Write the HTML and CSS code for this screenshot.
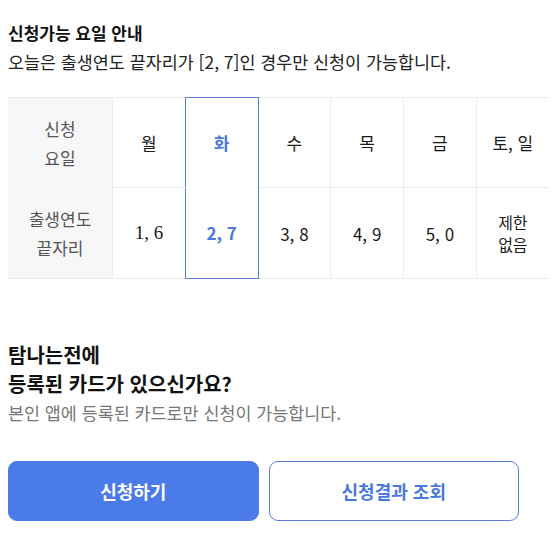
FILE: index.html
```html
<!DOCTYPE html>
<html lang="ko">
<head>
	<meta charset="utf-8">
	<meta name="viewport" content="width=device-width, initial-scale=1.0">
	<link rel="stylesheet" href="styles.css">
	<title>신청가능 요일 안내</title>
</head>
<body>
	<div class="guide">
		<h2 class="guide-title">신청가능 요일 안내</h2>
		<p class="guide-desc">오늘은 출생연도 끝자리가 [2, 7]인 경우만 신청이 가능합니다.</p>

		<table class="day-table">
			<tr class="row-day">
				<th>신청<br>요일</th>
				<td>월</td>
				<td class="today">화</td>
				<td>수</td>
				<td>목</td>
				<td>금</td>
				<td>토, 일</td>
			</tr>
			<tr class="row-num">
				<th>출생연도<br>끝자리</th>
				<td class="serif">1, 6</td>
				<td class="today">2, 7</td>
				<td>3, 8</td>
				<td>4, 9</td>
				<td>5, 0</td>
				<td class="none">제한<br>없음</td>
			</tr>
		</table>
	</div>

	<div class="card-info">
		<h3 class="card-title">탐나는전에<br>등록된 카드가 있으신가요?</h3>
		<p class="card-desc">본인 앱에 등록된 카드로만 신청이 가능합니다.</p>
	</div>

	<div class="btn-row">
		<button type="button" class="btn btn-primary">신청하기</button>
		<button type="button" class="btn btn-line">신청결과 조회</button>
	</div>
</body>
</html>
```

FILE: styles.css
```css
body {
	margin: 8px;
	font-family: "Noto Sans CJK KR", "Noto Sans", sans-serif;
	color: #111;
	background: #fff;
}
.guide {
	padding-top: 12px;
}
.guide-title {
	margin: 0;
	font-size: 17px;
	font-weight: 700;
	line-height: 26px;
}
.guide-desc {
	margin: 3px 0 0;
	font-size: 17.4px;
	line-height: 26px;
	color: #222;
}
.day-table {
	width: 100%;
	margin-top: 22px;
	border-collapse: collapse;
	table-layout: fixed;
	border-top: 1px solid #e8e8e8;
	border-bottom: 1px solid #e8e8e8;
	text-align: center;
	font-size: 17px;
}
.day-table th {
	width: 104px;
	padding: 0;
	background: #f7f7f7;
	color: #555;
	font-weight: 400;
	line-height: 29px;
}
.day-table td {
	padding: 0;
	border-left: 1px solid #ececec;
	color: #1a1a1a;
}
.row-day th,
.row-day td {
	height: 89px;
}
.row-num th,
.row-num td {
	height: 90px;
}
.row-day td {
	border-bottom: 1px solid #ececec;
}
.day-table .today {
	color: #4a78dc;
	font-weight: 700;
	border-left: 1px solid #5a7fd2;
	border-right: 1px solid #5a7fd2;
}
.row-day .today {
	border-top: 1px solid #5a7fd2;
	border-bottom: none;
}
.row-num .today {
	border-bottom: 1px solid #5a7fd2;
}
.day-table .serif {
	font-family: "Liberation Serif", serif;
	font-size: 19px;
}
.day-table .none {
	font-size: 16px;
	line-height: 22px;
}
.card-info {
	margin-top: 61px;
}
.card-title {
	margin: 0;
	font-size: 20px;
	font-weight: 700;
	line-height: 29px;
}
.card-desc {
	margin: 2px 0 0;
	font-size: 17.4px;
	line-height: 26px;
	color: #777;
}
.btn-row {
	display: flex;
	gap: 10px;
	width: 511px;
	margin-top: 35px;
}
.btn {
	flex: 1;
	height: 60px;
	border-radius: 9px;
	font-family: inherit;
	font-size: 18px;
	font-weight: 700;
	cursor: pointer;
}
.btn-primary {
	background: #4b7be8;
	border: 1px solid #4b7be8;
	color: #fff;
}
.btn-line {
	background: #fff;
	border: 1px solid #5a7fd2;
	color: #4a78dc;
}
```
